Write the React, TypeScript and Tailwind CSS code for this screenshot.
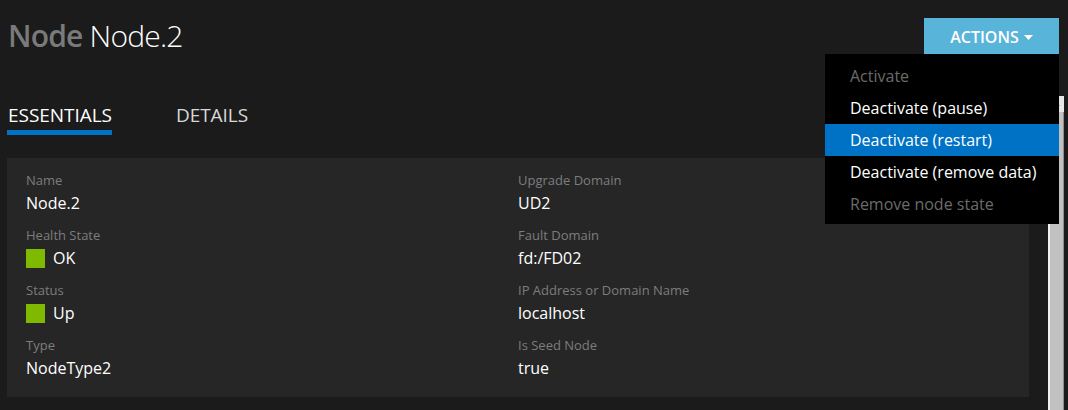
import React from "react";

const font = { fontFamily: '"Open Sans", "Noto Sans", sans-serif' };

function Field({ label, value, status }: { label: string; value: string; status?: boolean }) {
  return (
    <div className="flex flex-col">
      <div className="text-[13px] leading-[18px] text-[#7d7d7d]">{label}</div>
      <div className="mt-[2px] flex h-[24px] items-center text-[16px] leading-[24px] text-white">
        {status && <span className="mr-[8px] inline-block h-[19px] w-[19px] bg-[#7fba00]" />}
        <span>{value}</span>
      </div>
    </div>
  );
}

export default function App() {
  const menu = [
    { t: "Activate", d: true },
    { t: "Deactivate (pause)" },
    { t: "Deactivate (restart)", a: true },
    { t: "Deactivate (remove data)" },
    { t: "Remove node state", d: true },
  ];
  return (
    <div className="relative h-[410px] w-[1068px] overflow-hidden bg-[#1b1b1b]" style={font}>
      {/* header */}
      <div className="flex items-start justify-between pl-[8px] pr-[9px]">
        <h1 className="mt-[16px] text-[30px] leading-[40px] tracking-[-0.8px]">
          <span className="font-semibold text-[#7a7a7a]">Node</span>{" "}
          <span className="font-light text-white">Node.2</span>
        </h1>
        <button className="mt-[18px] flex h-[36px] w-[135px] items-center justify-center gap-[5px] bg-[#59b4d9] pt-[2px] text-[16px] font-semibold text-white">
          ACTIONS
          <svg width="9" height="5" viewBox="0 0 9 5">
            <path d="M0 0 H9 L4.5 5 Z" fill="white" />
          </svg>
        </button>
      </div>

      {/* tabs */}
      <div className="mt-[45px] flex gap-[64px] pl-[7px]">
        <div className="flex flex-col">
          <span className="pl-[1px] text-[19px] leading-[28px] tracking-[-0.05px] text-white">ESSENTIALS</span>
          <span className="mt-[1px] h-[5px] bg-[#0072c6]" />
        </div>
        <div className="flex flex-col">
          <span className="text-[19px] leading-[28px] tracking-[-0.05px] text-[#d8d8d8]">DETAILS</span>
        </div>
      </div>

      {/* card */}
      <div className="ml-[7px] mr-[39px] mt-[23px] grid grid-cols-2 bg-[#262626] pb-[17px] pl-[19px] pr-[19px] pt-[13px]">
        <div className="flex flex-col gap-[11px]">
          <Field label="Name" value="Node.2" />
          <Field label="Health State" value="OK" status />
          <Field label="Status" value="Up" status />
          <Field label="Type" value="NodeType2" />
        </div>
        <div className="flex flex-col gap-[11px]">
          <Field label="Upgrade Domain" value="UD2" />
          <Field label="Fault Domain" value="fd:/FD02" />
          <Field label="IP Address or Domain Name" value="localhost" />
          <Field label="Is Seed Node" value="true" />
        </div>
      </div>

      {/* scrollbar */}
      <div className="absolute left-[1048px] top-[96px] flex h-[314px] w-[16px] flex-col">
        <div className="flex h-[16px] items-center justify-center bg-[#e6e6e6]">
          <svg width="7" height="4" viewBox="0 0 7 4">
            <path d="M0 4 L3.5 0 L7 4 Z" fill="#707070" />
          </svg>
        </div>
        <div className="flex-1 border-l-2 border-r border-l-[#f0f0f0] border-r-[#8c8c8c] bg-[#c1c1c1]" />
      </div>

      {/* dropdown */}
      <div className="absolute right-[9px] top-[54px] w-[234px] bg-black pb-[4px] pt-[6px]">
        {menu.map((m) => (
          <div
            key={m.t}
            className={
              "flex h-[32px] items-center pl-[25px] text-[16px] " +
              (m.a ? "bg-[#0072c6] text-white" : m.d ? "text-[#6b6b6b]" : "text-white")
            }
          >
            {m.t}
          </div>
        ))}
      </div>
    </div>
  );
}
